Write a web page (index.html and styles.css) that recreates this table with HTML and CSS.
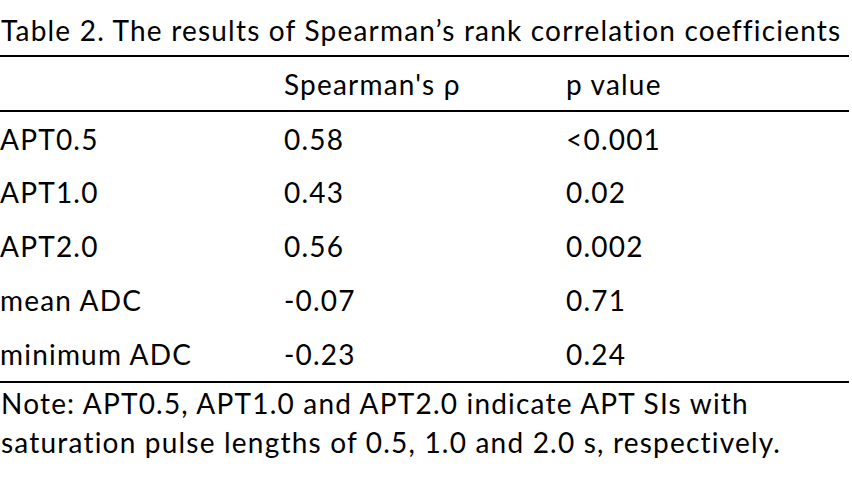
FILE: index.html
```html
<!DOCTYPE html>
<html>
<head>
<meta charset="utf-8">
<link rel="stylesheet" href="styles.css">
</head>
<body>
<div class="page">
  <p class="caption">Table 2. The results of Spearman’s rank correlation coefficients</p>
  <table class="results">
    <thead>
      <tr><th class="c1"></th><th class="c2">Spearman's ρ</th><th class="c3">p value</th></tr>
    </thead>
    <tbody>
      <tr><td>APT0.5</td><td>0.58</td><td>&lt;0.001</td></tr>
      <tr><td>APT1.0</td><td>0.43</td><td>0.02</td></tr>
      <tr><td>APT2.0</td><td>0.56</td><td>0.002</td></tr>
      <tr><td>mean ADC</td><td>-0.07</td><td>0.71</td></tr>
      <tr><td>minimum ADC</td><td>-0.23</td><td>0.24</td></tr>
    </tbody>
  </table>
  <p class="note">Note: APT0.5, APT1.0 and APT2.0 indicate APT SIs with<br>saturation pulse lengths of 0.5, 1.0 and 2.0 s, respectively.</p>
</div>
</body>
</html>
```
FILE: styles.css
```css
html, body {
  margin: 0;
  padding: 0;
  background: #fff;
}
.page {
  width: 849px;
  font-family: Lato, "Open Sans", "Liberation Sans", sans-serif;
  font-size: 28px;
  letter-spacing: 1.2px;
  font-variant-ligatures: none;
  color: #000;
}
.caption {
  margin: 0;
  padding: 0 0 0 1px;
  height: 55px;
  line-height: 60px;
  white-space: nowrap;
}
.results {
  width: 849px;
  border-collapse: collapse;
  table-layout: fixed;
}
.results thead tr {
  border-top: 2px solid #000;
  border-bottom: 2px solid #000;
}
.results tbody tr:last-child {
  border-bottom: 2px solid #000;
}
.results th {
  font-weight: normal;
  text-align: left;
  line-height: 47px;
  padding: 4px 0 2px 0;
}
.results td {
  line-height: 47px;
  padding: 3.66px 0 3.14px 0;
  text-align: left;
}
.c1 { width: 284px; }
.c2 { width: 282px; }
.note {
  margin: 0;
  padding: 1px 0 0 1px;
  line-height: 39px;
  white-space: nowrap;
}
```
